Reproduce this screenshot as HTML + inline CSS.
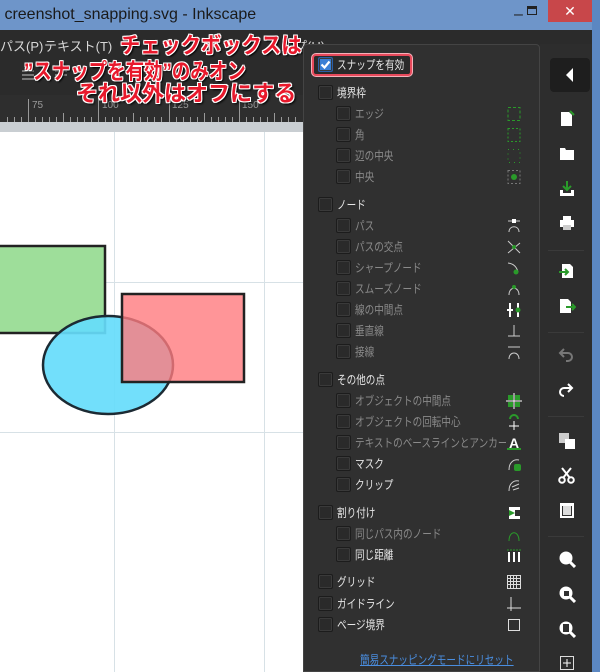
<!DOCTYPE html>
<html><head><meta charset="utf-8">
<style>
*{margin:0;padding:0;box-sizing:border-box}
body{width:600px;height:672px;overflow:hidden;position:relative;background:#2b2b2b;font-family:"Liberation Sans","Noto Sans CJK JP",sans-serif}
.abs{position:absolute}
#title{left:0;top:0;width:600px;height:30px;background:#6e95c9;color:#1a1a1a;font-size:16px;line-height:30px}
#menu{left:0;top:30px;width:592px;height:28px;background:#2b2b2b;color:#d8d8d8;font-size:13px}
#ruler{left:0;top:95px;width:303px;height:28px;background:#2e2e2e;color:#888;font-size:10px}
#strip{left:0;top:122px;width:303px;height:10px;background:#c9ced2}
#canvas{left:0;top:132px;width:303px;height:540px;background:#fff;overflow:hidden}
#pop{left:303px;top:44px;width:237px;height:628px;background:#303030;border:1px solid #444;border-radius:4px 4px 0 0}
#tb{left:540px;top:44px;width:52px;height:628px;background:#2d2d2d}
#blue{left:592px;top:0;width:8px;height:672px;background:#5b87c2}
.row{position:absolute;left:0;width:235px;height:20px;font-size:12px;line-height:20px;color:#e6e6e6;white-space:nowrap;padding-left:14px}
.row.s{padding-left:32px}
.t{display:inline-block;transform:scaleX(.8);transform-origin:left center}
.cb{display:inline-block;width:15px;height:15px;border:1px solid #1c1c1c;background:#2a2a2a;border-radius:2px;vertical-align:middle;margin-right:4px;position:relative;top:-1px;box-shadow:inset 0 0 0 1px #3a3a3a}
.dim{color:#8a8a8a}
.ico{position:absolute;left:202px;top:2px;width:16px;height:16px}
.ann{position:absolute;color:#e8192c;font-weight:bold;font-size:22px;white-space:nowrap;transform-origin:left top;text-shadow:-1px -1px 0 #fff,1px -1px 0 #fff,-1px 1px 0 #fff,1px 1px 0 #fff,0 1px 0 #fff,0 -1px 0 #fff,1px 0 0 #fff,-1px 0 0 #fff,2px 2px 2px #000}
.ti{position:absolute;left:18px;width:18px;height:18px}
</style></head><body>
<div id="title" class="abs">&nbsp;creenshot_snapping.svg - Inkscape
 <span class="abs" style="left:514px;top:0;color:#222">–</span>
 <span class="abs" style="left:527px;top:6px;width:10px;height:9px;border:1.5px solid #222;border-top-width:3px"></span>
 <span class="abs" style="left:548px;top:0;width:44px;height:22px;background:#c8474a;color:#fff;text-align:center;line-height:22px;font-size:14px">✕</span>
</div>
<div id="menu" class="abs"><span class="abs" style="left:0;top:6px">パス(P)</span><span class="abs" style="left:44px;top:6px">テキスト(T)</span><span class="abs" style="left:268px;top:6px">ヘルプ(H)</span></div>
<div class="abs" style="left:0;top:58px;width:303px;height:37px;background:#2b2b2b">
 <div class="abs" style="left:22px;top:12px;width:12px;height:2px;background:#777;box-shadow:0 4px 0 #777,0 8px 0 #777"></div>
 <div class="abs" style="left:55px;top:12px;width:12px;height:2px;background:#777;box-shadow:0 4px 0 #777"></div>
</div>
<div id="ruler" class="abs">
 <svg width="303" height="28" class="abs" style="left:0;top:0">
  <g stroke="#999" stroke-width="1">
   <line x1="28.5" y1="4" x2="28.5" y2="28"/><line x1="98.5" y1="4" x2="98.5" y2="28"/><line x1="169.5" y1="4" x2="169.5" y2="28"/><line x1="239.5" y1="4" x2="239.5" y2="28"/>
  <path d="M7.5 22v6M14.5 22v6M21.5 22v6M35.5 22v6M42.5 22v6M49.5 22v6M56.5 22v6M63.5 18v10M70.5 22v6M77.5 22v6M84.5 22v6M91.5 22v6M105.5 22v6M112.5 22v6M119.5 22v6M126.5 22v6M133.5 18v10M140.5 22v6M147.5 22v6M154.5 22v6M161.5 22v6M176.5 22v6M183.5 22v6M190.5 22v6M197.5 22v6M204.5 18v10M211.5 22v6M218.5 22v6M225.5 22v6M232.5 22v6M246.5 22v6M253.5 22v6M260.5 22v6M267.5 22v6M274.5 18v10M281.5 22v6M288.5 22v6M295.5 22v6"/>
  </g>
  <g fill="#999" font-size="10" font-family="Liberation Sans"><text x="32" y="13">75</text><text x="102" y="13">100</text><text x="172" y="13">125</text><text x="242" y="13">150</text></g>
 </svg>
</div>
<div id="strip" class="abs"></div>
<div id="canvas" class="abs">
 <svg width="303" height="540">
  <g stroke="#d7e1e6" stroke-width="1"><line x1="114.5" y1="0" x2="114.5" y2="540"/><line x1="264.5" y1="0" x2="264.5" y2="540"/><line x1="0" y1="150.5" x2="303" y2="150.5"/><line x1="0" y1="300.5" x2="303" y2="300.5"/></g>
  <rect x="-10" y="114" width="115" height="87" fill="#9ede9a" stroke="#222" stroke-width="2.5"/>
  <ellipse cx="108" cy="233" rx="65" ry="49" fill="#66dcfb" fill-opacity=".92" stroke="#1c2a33" stroke-width="2.5"/>
  <rect x="122" y="162" width="122" height="88" fill="#ff7a7e" fill-opacity=".8" stroke="#222" stroke-width="2.5"/>
 </svg>
</div>
<div class="ann" style="left:120px;top:28px;transform:scaleX(.92)">チェックボックスは</div>
<div class="ann" style="left:24px;top:54px;transform:scaleX(.84)">”スナップを有効”のみオン</div>
<div class="ann" style="left:76px;top:76px">それ以外はオフにする</div>

<div id="pop" class="abs">
 <div class="abs" style="left:8px;top:9px;width:100px;height:22px;border:2px solid #e7495b;border-radius:4px;background:#2a2a2a;box-shadow:0 0 0 1px #f4b0b8"></div>
 <div class="row" style="top:10px"><span class="cb" style="background:#3a7fd5;border-color:#2a5fa8"><svg width="13" height="13" style="position:absolute;left:0;top:0"><path d="M2.5 6.5l3 3 5-6" stroke="#fff" stroke-width="2.2" fill="none"/></svg></span><span class="t">スナップを有効</span></div>

 <div class="row" style="top:38px"><span class="cb"></span><span class="t">境界枠</span></div>
 <div class="row s dim" style="top:59px"><span class="cb"></span><span class="t">エッジ</span><svg class="ico"><rect x="2" y="1.5" width="12" height="13" fill="none" stroke="#2a9a2a" stroke-dasharray="3 2"/></svg></div>
 <div class="row s dim" style="top:80px"><span class="cb"></span><span class="t">角</span><svg class="ico"><rect x="2" y="1.5" width="12" height="13" fill="none" stroke="#2a9a2a" stroke-dasharray="2 2"/></svg></div>
 <div class="row s dim" style="top:101px"><span class="cb"></span><span class="t">辺の中央</span><svg class="ico"><rect x="2" y="1.5" width="12" height="13" fill="none" stroke="#2a9a2a" stroke-dasharray="1 4"/></svg></div>
 <div class="row s dim" style="top:122px"><span class="cb"></span><span class="t">中央</span><svg class="ico"><rect x="2" y="1.5" width="12" height="13" fill="none" stroke="#777" stroke-dasharray="2 2"/><circle cx="8" cy="8" r="3" fill="#2a9a2a"/></svg></div>

 <div class="row" style="top:150px"><span class="cb"></span><span class="t">ノード</span></div>
 <div class="row s dim" style="top:171px"><span class="cb"></span><span class="t">パス</span><svg class="ico"><path d="M2 3h12M3 14C3 7 13 7 13 14" stroke="#ccc" fill="none"/><rect x="6" y="1" width="4" height="4" fill="#fff"/></svg></div>
 <div class="row s dim" style="top:192px"><span class="cb"></span><span class="t">パスの交点</span><svg class="ico"><path d="M2 2l12 12M14 4L2 14" stroke="#ccc"/><circle cx="8" cy="8" r="2" fill="#2a9a2a"/></svg></div>
 <div class="row s dim" style="top:213px"><span class="cb"></span><span class="t">シャープノード</span><svg class="ico"><path d="M2 3q8 1 10 9" stroke="#ccc" fill="none"/><circle cx="10" cy="12" r="2.5" fill="#2a9a2a"/></svg></div>
 <div class="row s dim" style="top:234px"><span class="cb"></span><span class="t">スムーズノード</span><svg class="ico"><path d="M3 14C3 5 13 5 13 14" stroke="#ccc" fill="none"/><circle cx="8" cy="6" r="2" fill="#2a9a2a"/></svg></div>
 <div class="row s dim" style="top:255px"><span class="cb"></span><span class="t">線の中間点</span><svg class="ico"><path d="M4 1v14M1 8h6M12 1v14" stroke="#fff" stroke-width="2"/><circle cx="12" cy="8" r="2.5" fill="#2a9a2a"/></svg></div>
 <div class="row s dim" style="top:276px"><span class="cb"></span><span class="t">垂直線</span><svg class="ico"><path d="M8 2v11M2 13h12" stroke="#ccc"/></svg></div>
 <div class="row s dim" style="top:297px"><span class="cb"></span><span class="t">接線</span><svg class="ico"><path d="M2 3h12M3 15C3 7 13 7 13 15" stroke="#ccc" fill="none"/></svg></div>

 <div class="row" style="top:325px"><span class="cb"></span><span class="t">その他の点</span></div>
 <div class="row s dim" style="top:346px"><span class="cb"></span><span class="t">オブジェクトの中間点</span><svg class="ico"><rect x="2" y="2" width="5" height="5" fill="#2a9a2a"/><rect x="9" y="2" width="5" height="5" fill="#2a9a2a"/><rect x="2" y="9" width="5" height="5" fill="#2a9a2a"/><rect x="9" y="9" width="5" height="5" fill="#2a9a2a"/><path d="M8 0v16M0 8h16" stroke="#fff"/></svg></div>
 <div class="row s dim" style="top:367px"><span class="cb"></span><span class="t">オブジェクトの回転中心</span><svg class="ico"><path d="M8 7v9M3 12h10" stroke="#fff"/><path d="M4 5a4 4 0 0 1 8 0" stroke="#2a9a2a" stroke-width="2" fill="none"/></svg></div>
 <div class="row s dim" style="top:388px"><span class="cb"></span><span class="t">テキストのベースラインとアンカー</span><svg class="ico" style="background:#303030"><text x="3" y="13" fill="#fff" font-weight="bold" font-size="14" font-family="Liberation Sans">A</text><path d="M1 14h14" stroke="#2a9a2a" stroke-width="2"/></svg></div>
 <div class="row s" style="top:409px"><span class="cb"></span><span class="t">マスク</span><svg class="ico"><path d="M3 14C3 6 8 3 13 4" stroke="#ccc" fill="none"/><rect x="8" y="8" width="7" height="7" rx="2" fill="#2a9a2a"/></svg></div>
 <div class="row s" style="top:430px"><span class="cb"></span><span class="t">クリップ</span><svg class="ico"><path d="M3 14C3 6 8 3 13 4M6 10l7-3M7 13l6-2" stroke="#ccc" fill="none"/></svg></div>

 <div class="row" style="top:458px"><span class="cb"></span><span class="t">割り付け</span><svg class="ico"><rect x="3" y="2" width="11" height="12" fill="#fff"/><path d="M3 5l6 3-6 3z" fill="#2a9a2a"/><rect x="9" y="5" width="5" height="6" fill="#303030"/></svg></div>
 <div class="row s dim" style="top:479px"><span class="cb"></span><span class="t">同じパス内のノード</span><svg class="ico"><path d="M3 15C3 4 13 4 13 15" stroke="#2a9a2a" fill="none"/></svg></div>
 <div class="row s" style="top:500px"><span class="cb"></span><span class="t">同じ距離</span><svg class="ico"><path d="M3 5v10M8 5v10M13 5v10" stroke="#fff" stroke-width="2"/><path d="M1 3h14" stroke="#2a9a2a" stroke-dasharray="2 1"/></svg></div>

 <div class="row" style="top:527px"><span class="cb"></span><span class="t">グリッド</span><svg class="ico"><path d="M1.5 1.5h13v13h-13zM4.5 1v14M7.5 1v14M10.5 1v14M1 4.5h14M1 7.5h14M1 10.5h14" stroke="#ddd" fill="none"/></svg></div>
 <div class="row" style="top:549px"><span class="cb"></span><span class="t">ガイドライン</span><svg class="ico"><path d="M5 1v14M1 12h14" stroke="#ddd"/></svg></div>
 <div class="row" style="top:570px"><span class="cb"></span><span class="t">ページ境界</span><svg class="ico"><rect x="2.5" y="2.5" width="11" height="11" fill="none" stroke="#ddd"/></svg></div>

 <div class="abs" style="left:56px;top:606px;font-size:12px;color:#4a8ee0;text-decoration:underline;white-space:nowrap;transform:scaleX(.8);transform-origin:left center">簡易スナッピングモードにリセット</div>
</div>

<div id="tb" class="abs">
 <div class="abs" style="left:10px;top:14px;width:40px;height:34px;background:#1e1e1e;border-radius:4px"></div>
 <svg class="abs" style="left:26px;top:24px" width="8" height="14"><path d="M7 0v14L0 7z" fill="#fff"/></svg>
 <svg class="ti" style="top:66px"><path d="M3 2h8l3 3v11H3z" fill="#fff"/><path d="M12 1l4 4" stroke="#2a9a2a" stroke-width="2"/></svg>
 <svg class="ti" style="top:101px"><path d="M2 3h5l1 2h8v10H2z" fill="#fff"/></svg>
 <svg class="ti" style="top:136px"><path d="M2 10h3v3h8v-3h3v6H2z" fill="#fff"/><path d="M9 1v8M5 6l4 4 4-4" stroke="#2a9a2a" stroke-width="2" fill="none"/></svg>
 <svg class="ti" style="top:170px"><path d="M5 2h8v4H5zM2 6h14v7H2z" fill="#fff"/><rect x="5" y="11" width="8" height="5" fill="#ccc"/></svg>
 <div class="abs" style="left:8px;top:206px;width:36px;height:1px;background:#3a3a3a"></div>
 <svg class="ti" style="top:218px"><path d="M4 2h8l3 3v11H4z" fill="#fff"/><path d="M1 10h9M7 7l3 3-3 3" stroke="#2a9a2a" stroke-width="2" fill="none"/></svg>
 <svg class="ti" style="top:253px"><path d="M2 2h8l3 3v11H2z" fill="#fff"/><path d="M8 10h9M14 7l3 3-3 3" stroke="#2a9a2a" stroke-width="2" fill="none"/></svg>
 <div class="abs" style="left:8px;top:288px;width:36px;height:1px;background:#3a3a3a"></div>
 <svg class="ti" style="top:302px"><path d="M6 3L2 7l4 4M2 7h8a4 4 0 0 1 0 8H8" stroke="#777" stroke-width="2" fill="none"/></svg>
 <svg class="ti" style="top:337px"><path d="M10 3l4 4-4 4M14 7H6a4 4 0 0 0 0 8" stroke="#fff" stroke-width="2" fill="none"/></svg>
 <div class="abs" style="left:8px;top:372px;width:36px;height:1px;background:#3a3a3a"></div>
 <svg class="ti" style="top:388px"><rect x="1" y="1" width="10" height="10" fill="#ccc"/><rect x="7" y="7" width="10" height="10" fill="#fff"/></svg>
 <svg class="ti" style="top:423px"><circle cx="4" cy="13" r="2.8" stroke="#fff" stroke-width="2" fill="none"/><circle cx="13" cy="13" r="2.8" stroke="#fff" stroke-width="2" fill="none"/><path d="M5 11L13 1M12 11L4 1" stroke="#fff" stroke-width="2"/></svg>
 <svg class="ti" style="top:457px"><rect x="2" y="2" width="14" height="15" fill="#fff"/><rect x="4" y="5" width="10" height="10" fill="#303030"/><rect x="5" y="5" width="8" height="9" fill="#ddd"/></svg>
 <div class="abs" style="left:8px;top:492px;width:36px;height:1px;background:#3a3a3a"></div>
 <svg class="ti" style="top:506px"><circle cx="8" cy="8" r="6.5" fill="#fff"/><path d="M12 12l5 5" stroke="#fff" stroke-width="3"/></svg>
 <svg class="ti" style="top:541px"><circle cx="8" cy="8" r="6.5" fill="#fff"/><rect x="6" y="6" width="5" height="5" fill="#303030"/><path d="M12 12l5 5" stroke="#fff" stroke-width="3"/></svg>
 <svg class="ti" style="top:576px"><circle cx="8" cy="8" r="6.5" fill="#fff"/><rect x="5" y="4" width="6" height="8" fill="#303030"/><path d="M12 12l5 5" stroke="#fff" stroke-width="3"/></svg>
 <svg class="ti" style="top:610px"><rect x="2.5" y="2.5" width="13" height="13" fill="none" stroke="#ddd"/><path d="M9 5v8M5 9h8" stroke="#fff"/></svg>
</div>
<div id="blue" class="abs"></div>
</body></html>
